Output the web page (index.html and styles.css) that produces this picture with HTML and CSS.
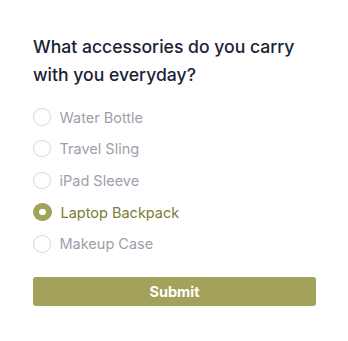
FILE: index.html
```html
<!DOCTYPE html>
<html lang="en">

<head>
  <meta charset="UTF-8">
  <meta name="viewport" content="width=device-width, initial-scale=1.0">
  <title>Accessories</title>
  <link rel="stylesheet" href="styles.css">
</head>

<body>

  <form class="survey">
    <h2 class="survey_title">What accessories do you carry with you everyday?</h2>

    <div class="survey_options">
      <label class="option">
        <input type="radio" name="accessory" value="bottle">
        <span class="option_dot"></span>
        <span class="option_text">Water Bottle</span>
      </label>
      <label class="option">
        <input type="radio" name="accessory" value="sling">
        <span class="option_dot"></span>
        <span class="option_text">Travel Sling</span>
      </label>
      <label class="option">
        <input type="radio" name="accessory" value="sleeve">
        <span class="option_dot"></span>
        <span class="option_text">iPad Sleeve</span>
      </label>
      <label class="option">
        <input type="radio" name="accessory" value="backpack" checked>
        <span class="option_dot"></span>
        <span class="option_text">Laptop Backpack</span>
      </label>
      <label class="option">
        <input type="radio" name="accessory" value="makeup">
        <span class="option_dot"></span>
        <span class="option_text">Makeup Case</span>
      </label>
    </div>

    <button type="button" class="submit_btn">Submit</button>
  </form>

</body>

</html>
```

FILE: styles.css
```css
body {
  margin: 0;
  font-family: Inter, "Noto Sans", sans-serif;
  background: #fff;
}

.survey {
  width: 283px;
  padding: 33px 0 0 33px;
}

.survey_title {
  margin: 0;
  font-size: 17.6px;
  line-height: 28px;
  font-weight: 500;
  color: #1a2236;
}

.survey_options {
  display: flex;
  flex-direction: column;
  gap: 7.7px;
  margin-top: 16px;
}

.option {
  display: flex;
  align-items: center;
  height: 24px;
  cursor: pointer;
}

.option input {
  display: none;
}

.option_dot {
  width: 15.5px;
  height: 15.5px;
  border: 1.5px solid #d4d6db;
  border-radius: 50%;
  box-sizing: content-box;
  flex-shrink: 0;
}

.option_text {
  margin-left: 9px;
  font-size: 14.5px;
  color: #9ca0aa;
}

.option input:checked + .option_dot {
  width: 6.5px;
  height: 6.5px;
  border: 6px solid #a2a25a;
  background: #fff;
}

.option input:checked ~ .option_text {
  color: #7b7c32;
}

.submit_btn {
  display: block;
  width: 100%;
  height: 29px;
  margin-top: 21px;
  border: none;
  border-radius: 3px;
  background: #a2a25a;
  color: #fff;
  font-family: Inter, "Noto Sans", sans-serif;
  font-size: 14.5px;
  font-weight: 700;
  cursor: pointer;
}
```
